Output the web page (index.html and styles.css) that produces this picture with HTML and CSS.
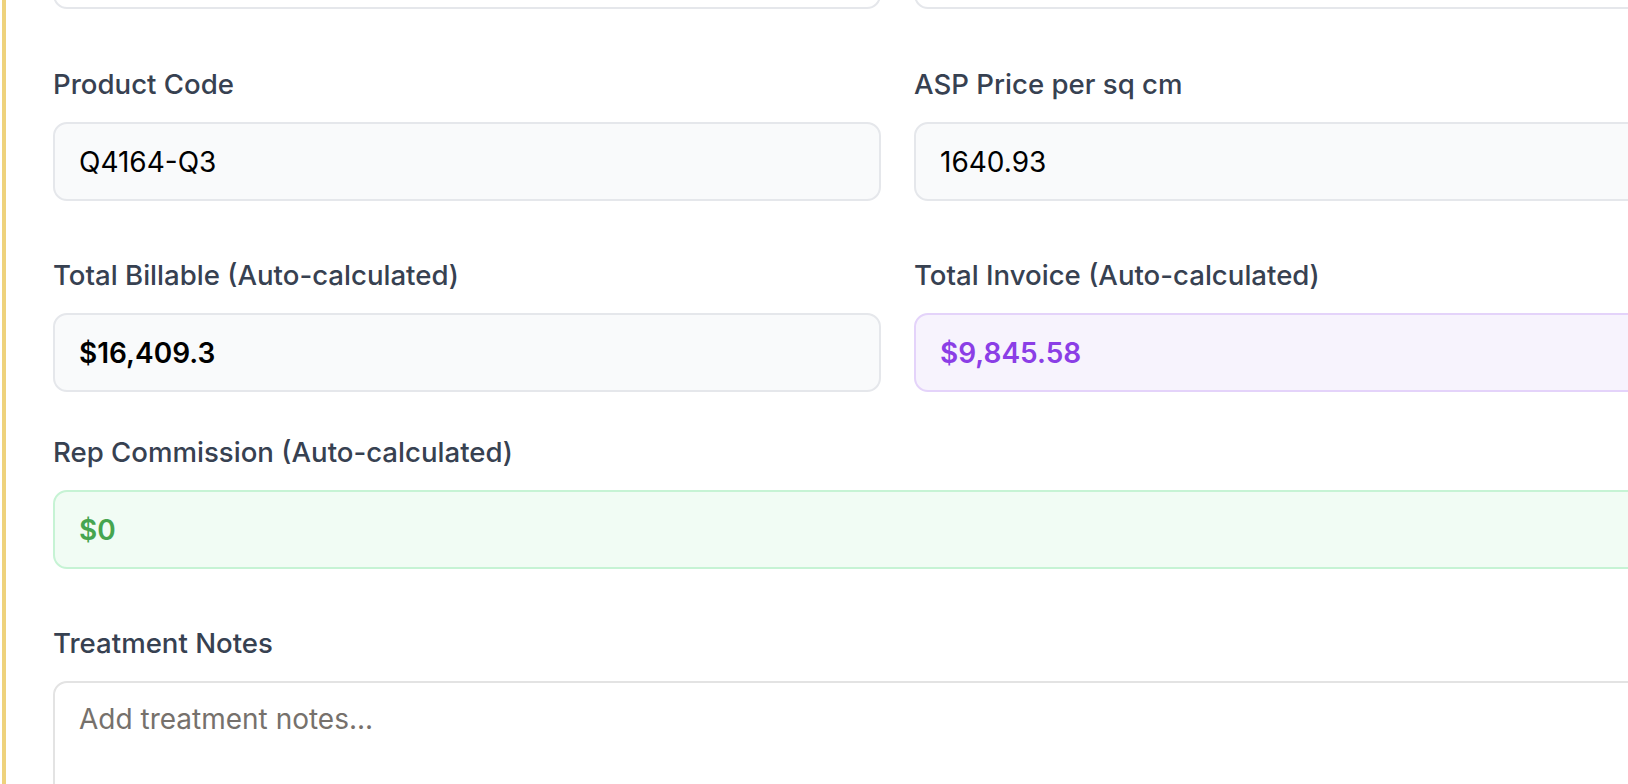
FILE: index.html
```html
<!DOCTYPE html>
<html lang="en">
<head>
<meta charset="utf-8">
<title>Treatment Form</title>
<link rel="stylesheet" href="styles.css">
</head>
<body>
<div class="page">
  <div class="form">
    <div class="grid2 top-row">
      <div class="field"><div class="input blank"></div></div>
      <div class="field"><div class="input blank"></div></div>
    </div>

    <div class="grid2 rows">
      <div class="field">
        <div class="label">Product Code</div>
        <div class="input">Q4164-Q3</div>
      </div>
      <div class="field">
        <div class="label">ASP Price per sq cm</div>
        <div class="input">1640.93</div>
      </div>
      <div class="field">
        <div class="label">Total Billable (Auto-calculated)</div>
        <div class="input strong">$16,409.3</div>
      </div>
      <div class="field">
        <div class="label">Total Invoice (Auto-calculated)</div>
        <div class="input strong purple">$9,845.58</div>
      </div>
    </div>

    <div class="field rep">
      <div class="label">Rep Commission (Auto-calculated)</div>
      <div class="input strong green">$0</div>
    </div>

    <div class="field notes">
      <div class="label">Treatment Notes</div>
      <div class="textarea">Add treatment notes...</div>
    </div>
  </div>
</div>
</body>
</html>
```

FILE: styles.css
```css
html, body {
  margin: 0;
  padding: 0;
  background: #ffffff;
  overflow: hidden;
  height: 784px;
}

body {
  font-family: Inter, "Noto Sans", "Liberation Sans", sans-serif;
}

.page {
  display: flow-root;
  box-sizing: border-box;
  margin-left: 2px;
  border-left: 4px solid #eed27c;
  height: 784px;
  padding-left: 47px;
  width: 1800px;
  overflow: hidden;
}

.form {
  width: 1689px;
}

.grid2 {
  display: grid;
  grid-template-columns: 828px 828px;
  column-gap: 33px;
}

.top-row {
  margin-top: -70px;
}

.rows {
  margin-top: 55px;
  row-gap: 54px;
}

.field {
  display: flex;
  flex-direction: column;
}

.label {
  font-size: 27.6px;
  line-height: 40px;
  font-weight: 500;
  color: #374151;
  margin-bottom: 18px;
}

.input {
  box-sizing: border-box;
  height: 79px;
  border: 2px solid #e5e7eb;
  border-radius: 14px;
  background: #f9fafb;
  padding: 0 24px;
  display: flex;
  align-items: center;
  font-size: 28px;
  color: #000000;
}

.input.blank {
  background: #ffffff;
}

.input.strong {
  font-weight: 600;
}

.input.purple {
  background: #f7f3fd;
  border-color: #e4d3fa;
  color: #8b3ee6;
}

.input.green {
  background: #f1fcf4;
  border-color: #c6f3d4;
  color: #46a54f;
}

.rep {
  margin-top: 40px;
}

.notes {
  margin-top: 54px;
}

.textarea {
  box-sizing: border-box;
  height: 220px;
  border: 2px solid #e3e3e3;
  border-radius: 14px;
  background: #ffffff;
  padding: 16px 24px;
  font-size: 28px;
  line-height: 40px;
  color: #76716c;
}
```
